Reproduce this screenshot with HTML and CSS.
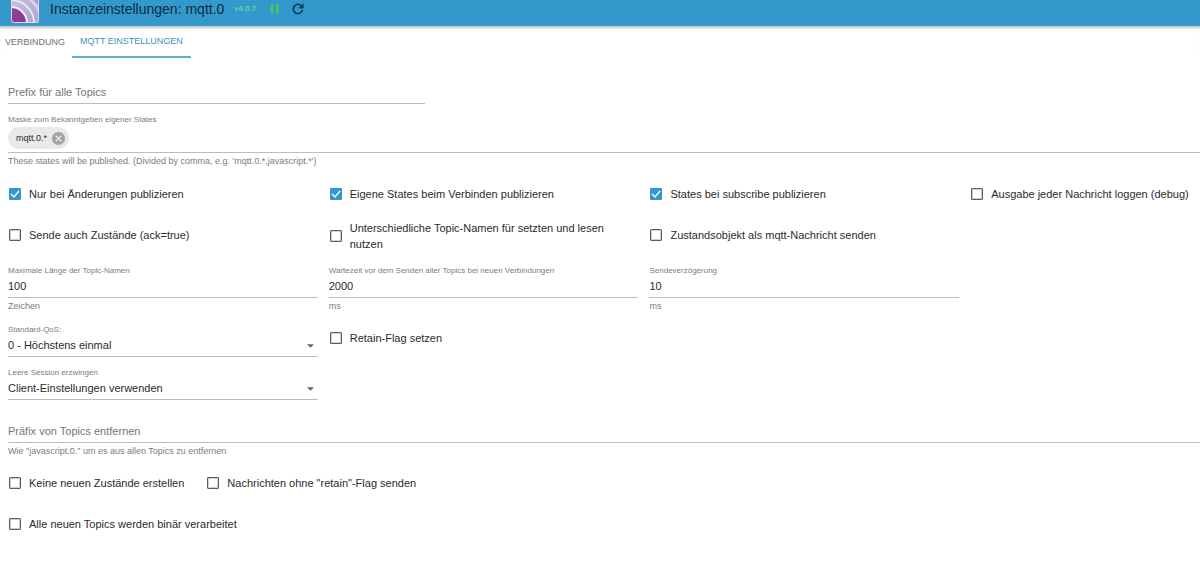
FILE: index.html
```html
<!DOCTYPE html>
<html lang="de">
<head>
<meta charset="utf-8">
<title>Instanzeinstellungen: mqtt.0</title>
<link rel="stylesheet" href="styles.css">
</head>
<body>
<header class="topbar">
  <svg class="logo" viewBox="0 0 28 28" aria-hidden="true">
    <defs>
      <clipPath id="tile"><rect width="28" height="28" rx="3"/></clipPath>
      <linearGradient id="core" x1="0" y1="0" x2="1" y2="1"><stop offset="0" stop-color="#9a4fa3"/><stop offset="1" stop-color="#7a2f88"/></linearGradient>
      <linearGradient id="ring" x1="0" y1="0" x2="1" y2="1"><stop offset="0" stop-color="#d6d0e8"/><stop offset="1" stop-color="#a193c8"/></linearGradient>
    </defs>
    <g clip-path="url(#tile)">
      <rect width="28" height="28" fill="#a99bcd"/>
      <circle cx="0" cy="28" r="32" fill="#d9d3ea"/>
      <circle cx="0" cy="28" r="29" fill="url(#ring)"/>
      <circle cx="0" cy="28" r="24" fill="#e9e4f4"/>
      <circle cx="0" cy="28" r="22" fill="url(#ring)"/>
      <circle cx="0" cy="28" r="17" fill="#f1edf8"/>
      <circle cx="0" cy="28" r="15" fill="url(#core)"/>
      <rect x=".5" y=".5" width="27" height="27" rx="3" fill="none" stroke="#ded9eb"/>
    </g>
  </svg>
  <h1 class="title">Instanzeinstellungen: mqtt.0</h1>
  <span class="version">v4.0.7</span>
  <button class="icon-button pause" type="button" aria-label="Pause">
    <svg width="10" height="10" viewBox="0 0 10 10"><path d="M1 0.5h2.500v9h-2.500zM6 0.5h2.500v9h-2.500z" fill="#4fc35c"/></svg>
  </button>
  <button class="icon-button" type="button" aria-label="Neu starten">
    <svg width="16" height="16" viewBox="0 0 24 24"><path d="M17.65 6.35C16.2 4.9 14.21 4 12 4c-4.42 0-7.99 3.58-7.99 8s3.57 8 7.99 8c3.73 0 6.84-2.55 7.73-6h-2.08c-.82 2.33-3.04 4-5.65 4-3.31 0-6-2.69-6-6s2.69-6 6-6c1.66 0 3.14.69 4.22 1.78L13 11h7V4l-2.35 2.35z" fill="#0d3e5c" stroke="#0d3e5c" stroke-width=".6"/></svg>
  </button>
</header>

<nav class="tabs">
  <button class="tab" type="button">VERBINDUNG</button>
  <button class="tab tab-active" type="button" aria-current="page">MQTT EINSTELLUNGEN</button>
</nav>

<main class="settings">
  <div class="field prefix">
    <input class="control" type="text" placeholder="Prefix für alle Topics" aria-label="Prefix für alle Topics">
  </div>

  <div class="field mask">
    <label class="label" for="mask">Maske zum Bekanntgeben eigener States</label>
    <div class="chips">
      <span class="chip">mqtt.0.*
        <button class="chip-remove" type="button" aria-label="Entfernen">
          <svg width="13" height="13" viewBox="2 2 20 20"><path d="M12 2C6.47 2 2 6.47 2 12s4.47 10 10 10 10-4.47 10-10S17.53 2 12 2zm5 13.59L15.59 17 12 13.41 8.41 17 7 15.59 10.59 12 7 8.41 8.41 7 12 10.59 15.59 7 17 8.41 13.41 12 17 15.59z" fill="#a3a3a3"/></svg>
        </button>
      </span>
      <input class="chip-input" id="mask" type="text">
    </div>
    <p class="helper">These states will be published. (Divided by comma, e.g. 'mqtt.0.*,javascript.*')</p>
  </div>

  <div class="grid">
    <label class="check"><input class="box" type="checkbox" checked><span>Nur bei Änderungen publizieren</span></label>
    <label class="check"><input class="box" type="checkbox" checked><span>Eigene States beim Verbinden publizieren</span></label>
    <label class="check"><input class="box" type="checkbox" checked><span>States bei subscribe publizieren</span></label>
    <label class="check"><input class="box" type="checkbox"><span>Ausgabe jeder Nachricht loggen (debug)</span></label>

    <label class="check first"><input class="box" type="checkbox"><span>Sende auch Zustände (ack=true)</span></label>
    <label class="check"><input class="box" type="checkbox"><span>Unterschiedliche Topic-Namen für setzten und lesen nutzen</span></label>
    <label class="check"><input class="box" type="checkbox"><span>Zustandsobjekt als mqtt-Nachricht senden</span></label>

    <div class="field first">
      <label class="label" for="length">Maximale Länge der Topic-Namen</label>
      <input class="control" id="length" type="text" value="100">
      <p class="helper">Zeichen</p>
    </div>
    <div class="field">
      <label class="label" for="wait">Wartezeit vor dem Senden aller Topics bei neuen Verbindungen</label>
      <input class="control" id="wait" type="text" value="2000">
      <p class="helper">ms</p>
    </div>
    <div class="field">
      <label class="label" for="delay">Sendeverzögerung</label>
      <input class="control" id="delay" type="text" value="10">
      <p class="helper">ms</p>
    </div>

    <div class="field first">
      <label class="label" for="qos">Standard-QoS:</label>
      <div class="select">
        <select class="control" id="qos"><option>0 - Höchstens einmal</option></select>
        <svg class="arrow" width="7" height="4" viewBox="0 0 8 4"><path d="M0 0l4 4 4-4z" fill="#666"/></svg>
      </div>
    </div>
    <label class="check"><input class="box" type="checkbox"><span>Retain-Flag setzen</span></label>

    <div class="field first">
      <label class="label" for="session">Leere Session erzwingen</label>
      <div class="select">
        <select class="control" id="session"><option>Client-Einstellungen verwenden</option></select>
        <svg class="arrow" width="7" height="4" viewBox="0 0 8 4"><path d="M0 0l4 4 4-4z" fill="#666"/></svg>
      </div>
    </div>
  </div>

  <div class="field remove-prefix">
    <input class="control" type="text" placeholder="Präfix von Topics entfernen" aria-label="Präfix von Topics entfernen">
    <p class="helper">Wie "javascript.0." um es aus allen Topics zu entfernen</p>
  </div>

  <div class="check-row">
    <label class="check"><input class="box" type="checkbox"><span>Keine neuen Zustände erstellen</span></label>
    <label class="check"><input class="box" type="checkbox"><span>Nachrichten ohne "retain"-Flag senden</span></label>
  </div>
  <div class="check-row">
    <label class="check"><input class="box" type="checkbox"><span>Alle neuen Topics werden binär verarbeitet</span></label>
  </div>
</main>
</body>
</html>
```
FILE: styles.css
```css
* {
  box-sizing: border-box;
}

body {
  margin: 0;
  background: #fff;
  color: #2b2b2b;
  font-family: "Liberation Sans", Arial, sans-serif;
  font-size: 11px;
  line-height: 16px;
}

button,
input,
select {
  margin: 0;
  padding: 0;
  border: 0;
  background: none;
  color: inherit;
  font: inherit;
}

.topbar {
  display: flex;
  align-items: center;
  height: 26px;
  padding: 0 11px 9px;
  overflow: hidden;
  background: #3399cc;
}

.logo {
  flex: none;
  width: 28px;
  height: 28px;
}

.title {
  margin: 0 10px 0 11px;
  color: #0e2c3d;
  font-size: 14px;
  font-weight: 400;
}

.version {
  color: #5df08a;
  font-size: 8px;
}

.icon-button {
  display: flex;
}

.pause {
  margin: 0 10px 0 14px;
}

.tabs {
  display: flex;
  height: 32px;
  box-shadow: inset 0 4px 3px -2px #c4c4c4;
}

.tab {
  padding: 0 7px 1px 5px;
  color: #707070;
  font-size: 9px;
}

.tab-active {
  padding: 0 8px;
  border-bottom: 2px solid #5fb0d3;
  color: #3a91bd;
}

.settings {
  padding-left: 8px;
}

.field {
  display: flex;
  flex-direction: column;
  padding: 7px 0 3px;
}

.prefix {
  width: 35%;
  padding-top: 25px;
}

.mask {
  padding-bottom: 4px;
}

.remove-prefix {
  padding-top: 19px;
}

.label,
.helper {
  margin: 0;
  color: #7c7c7c;
}

.label {
  font-size: 8px;
  line-height: 12px;
}

.helper {
  margin-top: 1px;
  font-size: 9px;
  line-height: 15px;
}

.control {
  width: 100%;
  height: 21px;
  padding-bottom: 2px;
  border-bottom: 1px solid #bdbdbd;
  border-radius: 0;
  appearance: none;
}

.control::placeholder {
  color: #757575;
  opacity: 1;
}

.select {
  position: relative;
}

.select .control {
  display: block;
}

.arrow {
  position: absolute;
  top: 8px;
  right: 4px;
  pointer-events: none;
}

.chips {
  display: flex;
  align-items: center;
  height: 27px;
  padding-bottom: 2px;
  border-bottom: 1px solid #bdbdbd;
}

.chip {
  display: flex;
  align-items: center;
  gap: 5px;
  height: 22px;
  padding: 0 4px 0 8px;
  border-radius: 11px;
  background: #e9e9e9;
  font-size: 9px;
}

.chip-remove {
  display: flex;
}

.chip-input {
  flex: 1;
}

.grid {
  display: grid;
  grid-template-columns: 310fr 310fr 310fr 230fr;
  column-gap: 11px;
  align-items: start;
}

.first {
  grid-column-start: 1;
}

.check {
  display: flex;
  align-items: center;
  gap: 8px;
  min-height: 41px;
  padding: 6px 0 6px 1px;
}

.box {
  flex: none;
  width: 12px;
  height: 12px;
  border: 1px solid #5c5c5c;
  outline: 1px solid #cfcfcf;
  outline-offset: -2px;
  border-radius: 1px;
  appearance: none;
}

.box:checked {
  border: 0;
  outline: 0;
  background: #3399cc url("data:image/svg+xml,%3Csvg xmlns='http://www.w3.org/2000/svg' viewBox='0 0 12 12'%3E%3Cpath d='M2 6l3 3 5-6' fill='none' stroke='white' stroke-width='1.4'/%3E%3C/svg%3E");
}

.check-row {
  display: flex;
  gap: 22px;
}
```
